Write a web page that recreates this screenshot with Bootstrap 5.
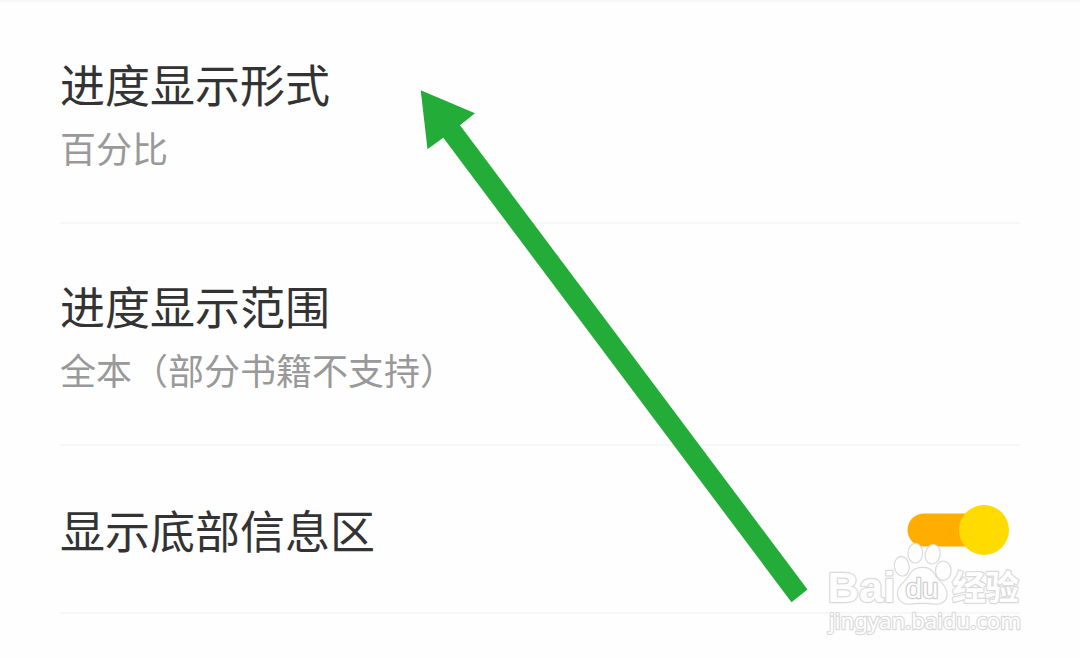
<!DOCTYPE html>
<html lang="zh-CN">
<head>
    <meta charset="UTF-8" />
    <meta name="viewport" content="width=device-width, initial-scale=1" />
    <title>进度显示设置</title>
    <link href="https://cdn.jsdelivr.net/npm/bootstrap@5.3.0/dist/css/bootstrap.min.css" rel="stylesheet" />
    <style>
        body {
            background: #fefefe;
            font-family: "Noto Sans CJK SC", sans-serif;
            overflow: hidden;
        }
        .page { height: 658px; border-top: 2px solid #f7f7f7; padding: 0 60px; }
        .setting { height: 222px; border-bottom: 2px solid #f7f7f7; padding-top: 49px; }
        .setting-switch { height: 168px; padding-top: 2px; }
        .setting-title { font-size: 45px; line-height: 66px; color: #333; }
        .setting-value { font-size: 36px; line-height: 54px; margin-top: 3px; color: #999; }
        .toggle { width: 102px; height: 50px; margin-right: 11px; }
        .overlay { width: 1080px; height: 658px; pointer-events: none; }
        .wm { fill: #fefefe; stroke: #dadada; stroke-width: 2.4; paint-order: stroke; stroke-linejoin: round; }
        .wm-latin { font-family: "Liberation Sans", sans-serif; font-weight: 700; }
        .wm-du { font-family: "Liberation Sans", sans-serif; stroke: #cfcfcf; }
        .wm-han { font-family: "Noto Sans CJK SC", sans-serif; font-weight: 700; }
        .wm-url { font-family: "Noto Sans", sans-serif; font-weight: 400; }
    </style>
</head>

<body>

    <main class="page">
        <div class="setting">
            <div class="setting-title">进度显示形式</div>
            <div class="setting-value">百分比</div>
        </div>

        <div class="setting">
            <div class="setting-title">进度显示范围</div>
            <div class="setting-value">全本（部分书籍不支持）</div>
        </div>

        <div class="setting setting-switch d-flex align-items-center justify-content-between">
            <div class="setting-title">显示底部信息区</div>
            <svg class="toggle" viewBox="0 0 102 50" role="switch" aria-checked="true">
                <rect x="0.5" y="8.5" width="90" height="33" rx="16.5" fill="#ffae00" />
                <circle cx="77" cy="25" r="25" fill="#ffdb00" />
            </svg>
        </div>
    </main>

    <!-- Arrow and watermark lie over the list -->
    <svg class="overlay position-absolute top-0 start-0" viewBox="0 0 1080 658">
        <polygon points="420.7,90.3 475,113.3 460,125.3 807.5,589.5 791.5,602.3 443.3,137.7 427.5,149.3" fill="#23ac38" />

        <g class="wm">
            <text class="wm-latin" x="827.5" y="602" font-size="43" textLength="68" lengthAdjust="spacingAndGlyphs">Bai</text>
            <g>
                <ellipse cx="901.8" cy="566.3" rx="6.8" ry="9.2" transform="rotate(-8 901.8 566.3)" />
                <ellipse cx="915.3" cy="553.2" rx="6.8" ry="9.2" />
                <ellipse cx="932.7" cy="554.3" rx="6.8" ry="9.2" transform="rotate(12 932.7 554.3)" />
                <ellipse cx="943.3" cy="570.8" rx="7.2" ry="9.2" />
                <path d="M922.500 568C914 568 911 573 908.500 577C905 583 897.500 586 898 594C898.500 601 904 604 910 603.500C916 602.500 929 602.500 935 603.500C942 604.500 946.500 600 946.500 594C946.500 586 939 582 935.500 576.500C932 571 930 568 922.500 568Z" />
            </g>
            <text class="wm-du" x="905.5" y="598" font-size="27" textLength="33" lengthAdjust="spacingAndGlyphs">du</text>
            <text class="wm-han" x="952" y="600" font-size="34" textLength="67">经验</text>
            <text class="wm-url" x="829" y="628.5" font-size="21.500" textLength="192" lengthAdjust="spacingAndGlyphs">jingyan.baidu.com</text>
        </g>
    </svg>

    <script src="https://cdn.jsdelivr.net/npm/bootstrap@5.3.0/dist/js/bootstrap.bundle.min.js"></script>
</body>
</html>
